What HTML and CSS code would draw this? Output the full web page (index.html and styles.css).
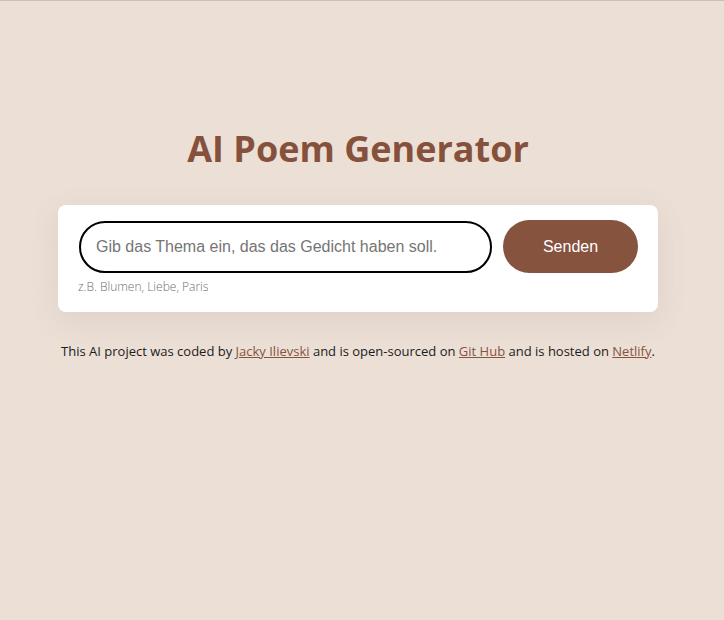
FILE: index.html
```html
<!DOCTYPE html>
<html lang="de">
<head>
<meta charset="utf-8">
<title>AI Poem Generator</title>
<link rel="stylesheet" href="styles.css">
</head>
<body>
<div class="container">
  <h1 class="title">AI Poem Generator</h1>
  <div class="card">
    <form class="form">
      <input class="input" type="text" placeholder="Gib das Thema ein, das das Gedicht haben soll.">
      <button class="button" type="button">Senden</button>
    </form>
    <div class="hint">z.B. Blumen, Liebe, Paris</div>
  </div>
  <footer class="footer">
    This AI project was coded by <a href="#">Jacky Ilievski</a> and is open-sourced on <a href="#">Git Hub</a> and is hosted on <a href="#">Netlify</a>.
  </footer>
</div>
</body>
</html>
```
FILE: styles.css
```css
html, body {
  margin: 0;
  padding: 0;
}
body {
  background: #ebdfd6;
  border-top: 1px solid #cbbfbd;
  font-family: "Open Sans", sans-serif;
  min-height: 619px;
  padding-right: 8px;
}
.container {
  max-width: 600px;
  margin: 0 auto;
  padding-top: 124px;
}
.title {
  margin: 0;
  text-align: center;
  color: #86513c;
  font-size: 36px;
  font-weight: 700;
  line-height: 48px;
}
.card {
  margin-top: 32px;
  background: #fff;
  border-radius: 8px;
  box-shadow: 0 8px 30px rgba(150, 110, 90, 0.12);
  padding: 15px 20px 17px 20px;
}
.form {
  display: flex;
  gap: 11px;
  align-items: flex-end;
}
.input {
  flex: 1;
  height: 52px;
  box-sizing: border-box;
  border: 2px solid #000;
  border-radius: 26px;
  padding: 0 15px;
  font-family: "Liberation Sans", Arial, sans-serif;
  font-size: 16px;
  color: #222;
  outline: none;
  margin-left: 1px;
}
.input::placeholder {
  color: #757575;
}
.button {
  width: 135px;
  height: 53px;
  border: none;
  border-radius: 27px;
  background: #86533f;
  color: #fff;
  font-family: "Liberation Sans", Arial, sans-serif;
  font-size: 16px;
}
.hint {
  margin-top: 5px;
  font-size: 12px;
  font-weight: 300;
  color: #6f6f6f;
  line-height: 17px;
}
.footer {
  margin-top: 30px;
  text-align: center;
  font-size: 13px;
  color: #1c1c1c;
  line-height: 18px;
}
.footer a {
  color: #86533f;
}
```
